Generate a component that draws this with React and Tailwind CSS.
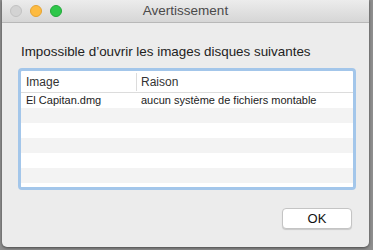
import React from 'react';

const rows = [
  { image: 'El Capitan.dmg', reason: 'aucun système de fichiers montable' },
  null,
  null,
  null,
  null,
  null,
  null,
];

export default function App() {
  return (
    <div className="w-[373px] h-[250px] bg-[#8e8e8e] overflow-hidden" style={{ fontFamily: '"Liberation Sans", Arial, sans-serif' }}>
      <div className="ml-[2px] w-[367px] h-[247px] bg-[#ececec] rounded-b-[5px] shadow-[0_1px_3px_rgba(0,0,0,0.5)] flex flex-col overflow-hidden">
        {/* title bar */}
        <div className="relative h-[23px] shrink-0 bg-gradient-to-b from-[#ececec] to-[#d6d6d6] border-b border-[#b8b8b8] flex items-center">
          <div className="flex items-center gap-[8px] pl-[8px]">
            <span className="w-[12px] h-[12px] rounded-full bg-[#d3d3d3] border border-[#c2c2c2]" />
            <span className="w-[12px] h-[12px] rounded-full bg-[#fdbb41] border border-[#e5a332]" />
            <span className="w-[12px] h-[12px] rounded-full bg-[#2ec74a] border border-[#22a83a]" />
          </div>
          <div className="absolute inset-0 flex items-center justify-center text-[13.5px] text-[#4a4a4a]">
            Avertissement
          </div>
        </div>

        <div className="pl-[19px] pt-[21px] h-[16px] box-content text-[13.4px] leading-[16px] text-[#222]">
          Impossible d’ouvrir les images disques suivantes
        </div>

        {/* table */}
        <div className="ml-[16px] mt-[8px] w-[338px] h-[122px] border-[3px] border-[#a3c6ea] rounded-[4px] bg-white overflow-hidden">
          <div className="h-[22px] flex items-center border-b border-[#dcdcdc] text-[12px] text-[#333]">
            <div className="w-[116px] pl-[5px] border-r border-[#dcdcdc] h-[18px] flex items-center">Image</div>
            <div className="pl-[4px]">Raison</div>
          </div>
          {rows.map((r, i) => (
            <div
              key={i}
              className={`h-[15px] flex items-center text-[11px] text-[#222] ${i % 2 === 1 ? 'bg-[#f3f3f3]' : 'bg-white'}`}
            >
              <div className="w-[116px] pl-[5px]">{r ? r.image : ''}</div>
              <div className="pl-[4px]">{r ? r.reason : ''}</div>
            </div>
          ))}
        </div>

        <div className="flex justify-end pr-[17px] mt-[18px]">
          <button className="w-[70px] h-[21px] bg-white rounded-[4px] border border-[#c4c4c4] shadow-[0_1px_1px_rgba(0,0,0,0.15)] text-[13px] text-[#111] flex items-center justify-center">
            OK
          </button>
        </div>
      </div>
    </div>
  );
}
